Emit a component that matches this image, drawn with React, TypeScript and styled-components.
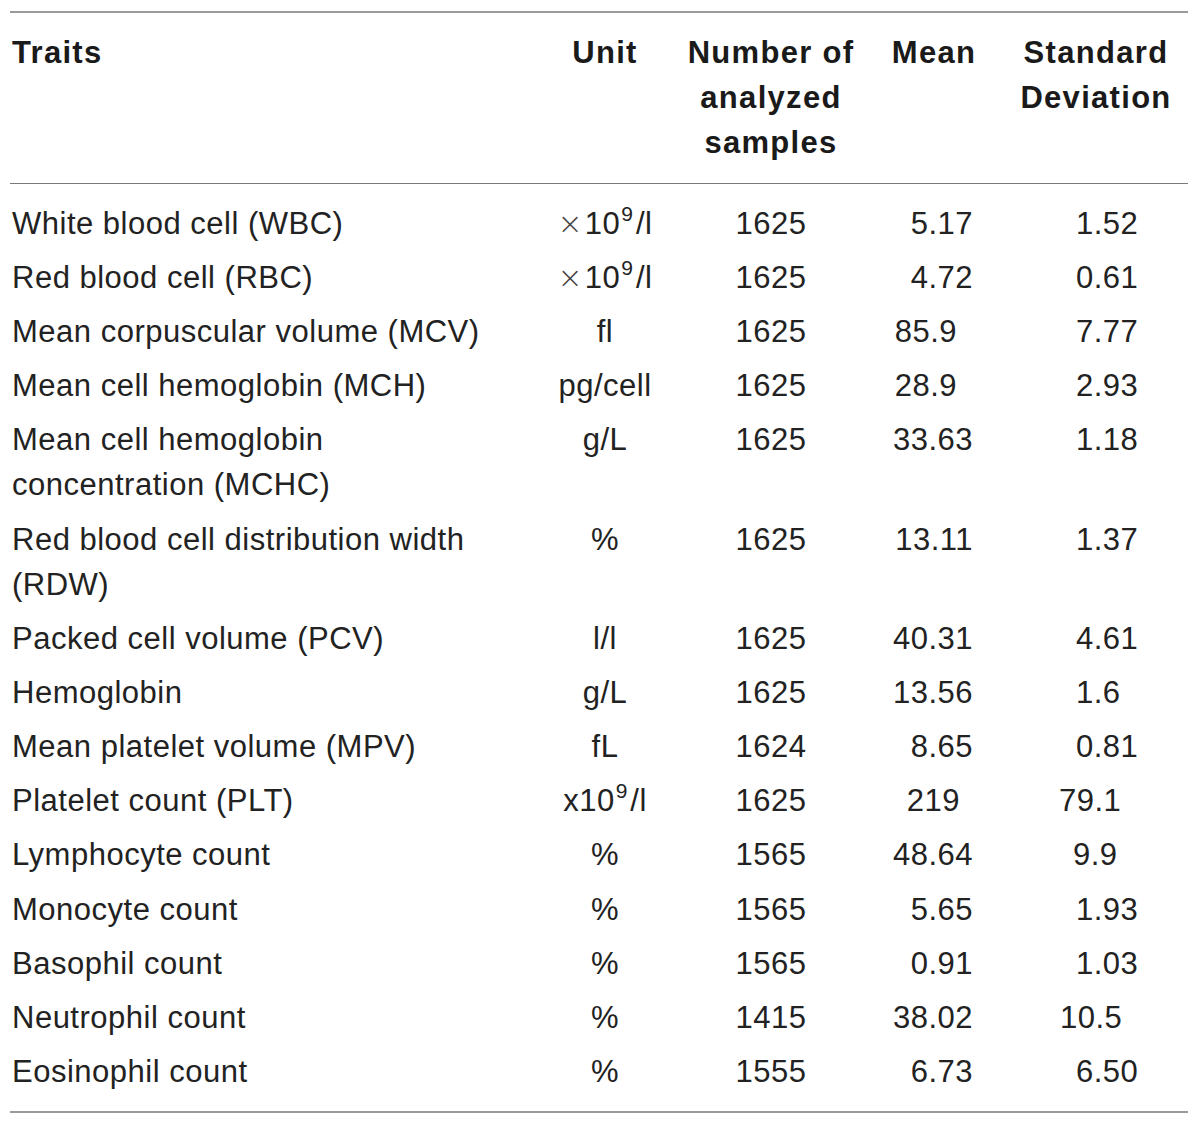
import React from "react";
import styled, { createGlobalStyle } from "styled-components";

const GlobalStyle = createGlobalStyle`
  html, body {
    margin: 0;
    padding: 0;
    background: #ffffff;
  }
  body {
    font-family: "Liberation Sans", Arial, sans-serif;
    color: #222222;
  }
`;

const Page = styled.div`
  width: 1200px;
  padding: 11px 12px 0 10px;
  box-sizing: border-box;
`;

const Table = styled.div`
  width: 1178px;
  border-top: 2px solid #9a9a9a;
  border-bottom: 2px solid #9a9a9a;
  font-size: 31px;
  line-height: 45px;
  letter-spacing: 0.5px;
`;

const GRID = "530px 130px 202px 124px 192px";

const HeaderRow = styled.div`
  display: grid;
  grid-template-columns: ${GRID};
  padding: 17px 0 18px;
  border-bottom: 1.5px solid #7a7a7a;
  font-weight: 700;
  letter-spacing: 1.3px;
  color: #1a1a1a;
`;

const HeadCell = styled.div<{ $align?: "left" | "center"; $shift?: number }>`
  text-align: ${(p) => p.$align ?? "center"};
  padding-left: ${(p) => (p.$align === "left" ? 2 : p.$shift ?? 0)}px;
  white-space: nowrap;
`;

const Body = styled.div`
  padding: 12px 0 12px;
`;

const Row = styled.div`
  display: grid;
  grid-template-columns: ${GRID};
  padding: 4.6px 0 4.6px;
`;

const TraitCell = styled.div`
  padding-left: 2px;
  padding-right: 40px;
`;

const CenterCell = styled.div`
  text-align: center;
  white-space: nowrap;
`;

const MeanCell = styled.div<{ $right: number }>`
  text-align: right;
  padding-right: ${(p) => p.$right}px;
  white-space: nowrap;
`;

const SdCell = styled.div<{ $left: number }>`
  text-align: left;
  padding-left: ${(p) => p.$left}px;
  white-space: nowrap;
`;

const Times = styled.span`
  font-family: "DejaVu Sans", sans-serif;
  font-size: 30px;
  font-weight: 200;
  margin-right: 2px;
  color: #444;
  letter-spacing: 0;
`;

const Sup = styled.sup`
  font-size: 21px;
  line-height: 0;
  vertical-align: 0;
  position: relative;
  top: -13px;
  margin: 0 3px 0 1px;
  letter-spacing: 0;
`;

type Unit = "x109" | "times109" | string;

interface Trait {
  name: string;
  unit: Unit;
  n: string;
  mean: string;
  meanRight?: number;
  sd: string;
  sdLeft?: number;
}

const rows: Trait[] = [
  { name: "White blood cell (WBC)", unit: "times109", n: "1625", mean: "5.17", sd: "1.52" },
  { name: "Red blood cell (RBC)", unit: "times109", n: "1625", mean: "4.72", sd: "0.61" },
  { name: "Mean corpuscular volume (MCV)", unit: "fl", n: "1625", mean: "85.9", meanRight: 39, sd: "7.77" },
  { name: "Mean cell hemoglobin (MCH)", unit: "pg/cell", n: "1625", mean: "28.9", meanRight: 39, sd: "2.93" },
  { name: "Mean cell hemoglobin concentration (MCHC)", unit: "g/L", n: "1625", mean: "33.63", sd: "1.18" },
  { name: "Red blood cell distribution width (RDW)", unit: "%", n: "1625", mean: "13.11", sd: "1.37" },
  { name: "Packed cell volume (PCV)", unit: "l/l", n: "1625", mean: "40.31", sd: "4.61" },
  { name: "Hemoglobin", unit: "g/L", n: "1625", mean: "13.56", sd: "1.6" },
  { name: "Mean platelet volume (MPV)", unit: "fL", n: "1624", mean: "8.65", sd: "0.81" },
  { name: "Platelet count (PLT)", unit: "x109", n: "1625", mean: "219", meanRight: 36, sd: "79.1", sdLeft: 63 },
  { name: "Lymphocyte count", unit: "%", n: "1565", mean: "48.64", sd: "9.9", sdLeft: 77 },
  { name: "Monocyte count", unit: "%", n: "1565", mean: "5.65", sd: "1.93" },
  { name: "Basophil count", unit: "%", n: "1565", mean: "0.91", sd: "1.03" },
  { name: "Neutrophil count", unit: "%", n: "1415", mean: "38.02", sd: "10.5", sdLeft: 64 },
  { name: "Eosinophil count", unit: "%", n: "1555", mean: "6.73", sd: "6.50" },
];

function UnitText({ unit }: { unit: Unit }) {
  if (unit === "times109") {
    return (
      <>
        <Times>×</Times>10<Sup>9</Sup>/l
      </>
    );
  }
  if (unit === "x109") {
    return (
      <>
        x10<Sup>9</Sup>/l
      </>
    );
  }
  return <>{unit}</>;
}

export default function App() {
  return (
    <Page>
      <GlobalStyle />
      <Table>
        <HeaderRow>
          <HeadCell $align="left">Traits</HeadCell>
          <HeadCell>Unit</HeadCell>
          <HeadCell>
            Number of
            <br />
            analyzed
            <br />
            samples
          </HeadCell>
          <HeadCell>Mean</HeadCell>
          <HeadCell $shift={8}>
            Standard
            <br />
            Deviation
          </HeadCell>
        </HeaderRow>
        <Body>
          {rows.map((r) => (
            <Row key={r.name}>
              <TraitCell>{r.name}</TraitCell>
              <CenterCell>
                <UnitText unit={r.unit} />
              </CenterCell>
              <CenterCell>{r.n}</CenterCell>
              <MeanCell $right={r.meanRight ?? 23}>{r.mean}</MeanCell>
              <SdCell $left={r.sdLeft ?? 80}>{r.sd}</SdCell>
            </Row>
          ))}
        </Body>
      </Table>
    </Page>
  );
}
